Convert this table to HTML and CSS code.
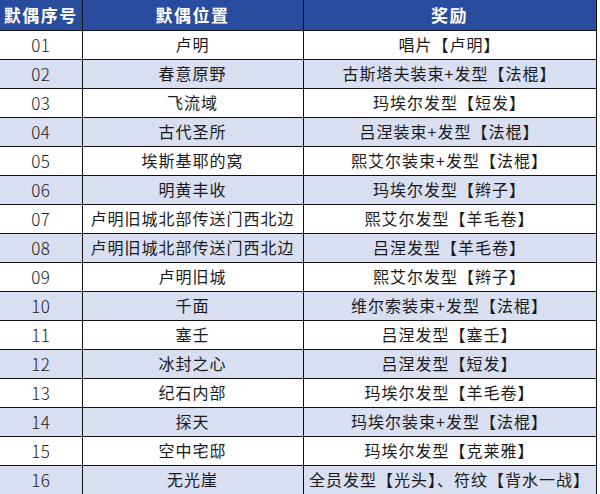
FILE: index.html
```html
<!DOCTYPE html>
<html lang="zh-CN">
<head>
<meta charset="utf-8">
<link rel="stylesheet" href="styles.css">
</head>
<body>
<table class="tbl">
<colgroup><col class="c1"><col class="c2"><col class="c3"></colgroup>
<thead>
<tr class="head"><th>默偶序号</th><th>默偶位置</th><th>奖励</th></tr>
</thead>
<tbody>
<tr><td>01</td><td>卢明</td><td>唱片【卢明】</td></tr>
<tr class="alt"><td>02</td><td>春意原野</td><td>古斯塔夫装束+发型【法棍】</td></tr>
<tr><td>03</td><td>飞流域</td><td>玛埃尔发型【短发】</td></tr>
<tr class="alt"><td>04</td><td>古代圣所</td><td>吕涅装束+发型【法棍】</td></tr>
<tr><td>05</td><td>埃斯基耶的窝</td><td>熙艾尔装束+发型【法棍】</td></tr>
<tr class="alt"><td>06</td><td>明黄丰收</td><td>玛埃尔发型【辫子】</td></tr>
<tr><td>07</td><td>卢明旧城北部传送门西北边</td><td>熙艾尔发型【羊毛卷】</td></tr>
<tr class="alt"><td>08</td><td>卢明旧城北部传送门西北边</td><td>吕涅发型【羊毛卷】</td></tr>
<tr><td>09</td><td>卢明旧城</td><td>熙艾尔发型【辫子】</td></tr>
<tr class="alt"><td>10</td><td>千面</td><td>维尔索装束+发型【法棍】</td></tr>
<tr><td>11</td><td>塞壬</td><td>吕涅发型【塞壬】</td></tr>
<tr class="alt"><td>12</td><td>冰封之心</td><td>吕涅发型【短发】</td></tr>
<tr><td>13</td><td>纪石内部</td><td>玛埃尔发型【羊毛卷】</td></tr>
<tr class="alt"><td>14</td><td>探天</td><td>玛埃尔装束+发型【法棍】</td></tr>
<tr><td>15</td><td>空中宅邸</td><td>玛埃尔发型【克莱雅】</td></tr>
<tr class="alt"><td>16</td><td>无光崖</td><td>全员发型【光头】、符纹【背水一战】</td></tr>
</tbody>
</table>
</body>
</html>
```
FILE: styles.css
```css
html, body {
  margin: 0;
  padding: 0;
  background: #ffffff;
}
.tbl {
  border-collapse: collapse;
  width: 596px;
  table-layout: fixed;
  font-family: "Noto Sans CJK SC", "Noto Sans", sans-serif;
  color: #1a1a1a;
}
.c1 { width: 82px; }
.c2 { width: 221px; }
.c3 { width: 293px; }
.tbl th, .tbl td {
  border: 1px solid #111111;
  padding: 0;
  text-align: center;
  white-space: nowrap;
  overflow: hidden;
}
.tbl tr > :first-child { border-left: none; }
.tbl thead tr > * { border-top: none; }
.head {
  height: 30px;
  background: #2a4c9e;
}
.head th {
  color: #ffffff;
  font-size: 17px;
  font-weight: 700;
  letter-spacing: 1.5px;
  line-height: 28px;
}
.tbl tbody tr {
  height: 29px;
  background: #ffffff;
}
.tbl tbody tr.alt {
  background: #d7dff1;
}
.tbl td {
  font-size: 16px;
  letter-spacing: 1px;
  line-height: 27px;
  font-weight: 400;
}
.tbl td:first-child {
  font-size: 17px;
  letter-spacing: 0.5px;
  font-weight: 300;
}
```
